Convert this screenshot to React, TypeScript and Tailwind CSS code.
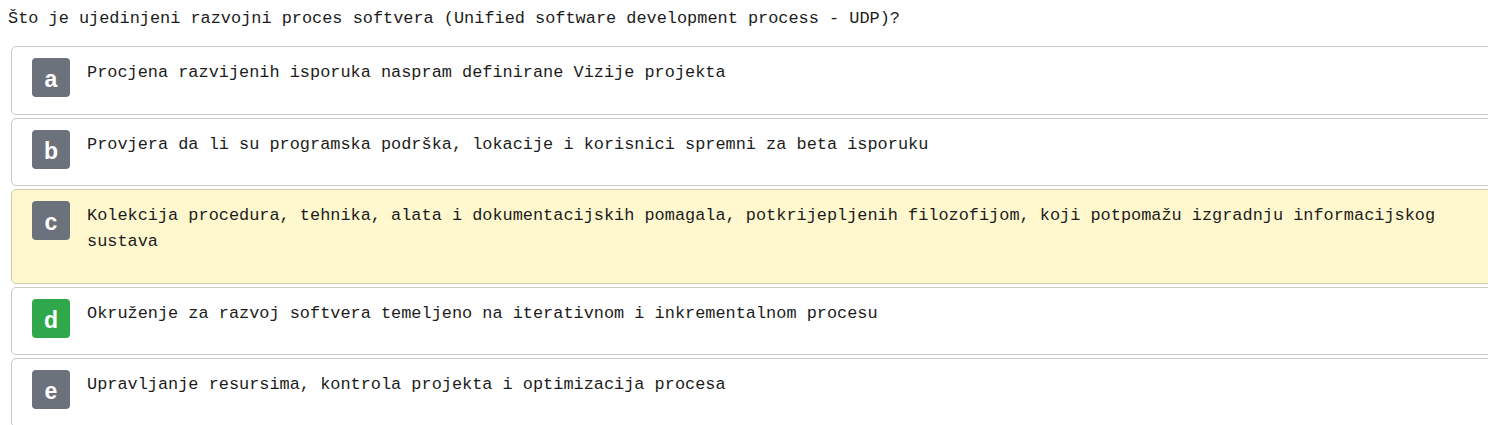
const options = [
  { key: "a", text: "Procjena razvijenih isporuka naspram definirane Vizije projekta" },
  { key: "b", text: "Provjera da li su programska podrška, lokacije i korisnici spremni za beta isporuku" },
  {
    key: "c",
    text: "Kolekcija procedura, tehnika, alata i dokumentacijskih pomagala, potkrijepljenih filozofijom, koji potpomažu izgradnju informacijskog sustava",
    selected: true
  },
  { key: "d", text: "Okruženje za razvoj softvera temeljeno na iterativnom i inkrementalnom procesu", correct: true },
  { key: "e", text: "Upravljanje resursima, kontrola projekta i optimizacija procesa" }
];

export default function App() {
  return (
    <main className="h-[425px] w-[1488px] overflow-hidden bg-white pt-[6px] font-['Liberation_Mono',monospace] text-[16.9px] leading-[26px] text-[#1c1c1c]">
      <p className="pl-[8px]">Što je ujedinjeni razvojni proces softvera (Unified software development process - UDP)?</p>
      <div className="mt-[14px] ml-[11px] flex w-[1500px] flex-col gap-[3px]">
        {options.map((o) => (
          <div
            key={o.key}
            className={
              o.selected
                ? "flex gap-[17px] rounded-[5px] border border-[#cfcbb0] bg-[#fff8cf] pt-[11px] pb-[11.5px] pl-[20px]"
                : "flex gap-[17px] rounded-[5px] border border-[#cacaca] bg-white pt-[11px] pb-[11.5px] pl-[20px]"
            }
          >
            <span
              className={
                o.correct
                  ? "flex h-[39px] w-[38px] shrink-0 items-center justify-center rounded-[4px] bg-[#2ea84a] pt-[3px] font-['Liberation_Sans',sans-serif] text-[23px] font-black text-white"
                  : "flex h-[39px] w-[38px] shrink-0 items-center justify-center rounded-[4px] bg-[#6b727c] pt-[3px] font-['Liberation_Sans',sans-serif] text-[23px] font-black text-white"
              }
            >
              {o.key}
            </span>
            <p className="mb-[16px] max-w-[1380px] pt-[2px]">{o.text}</p>
          </div>
        ))}
      </div>
    </main>
  );
}
